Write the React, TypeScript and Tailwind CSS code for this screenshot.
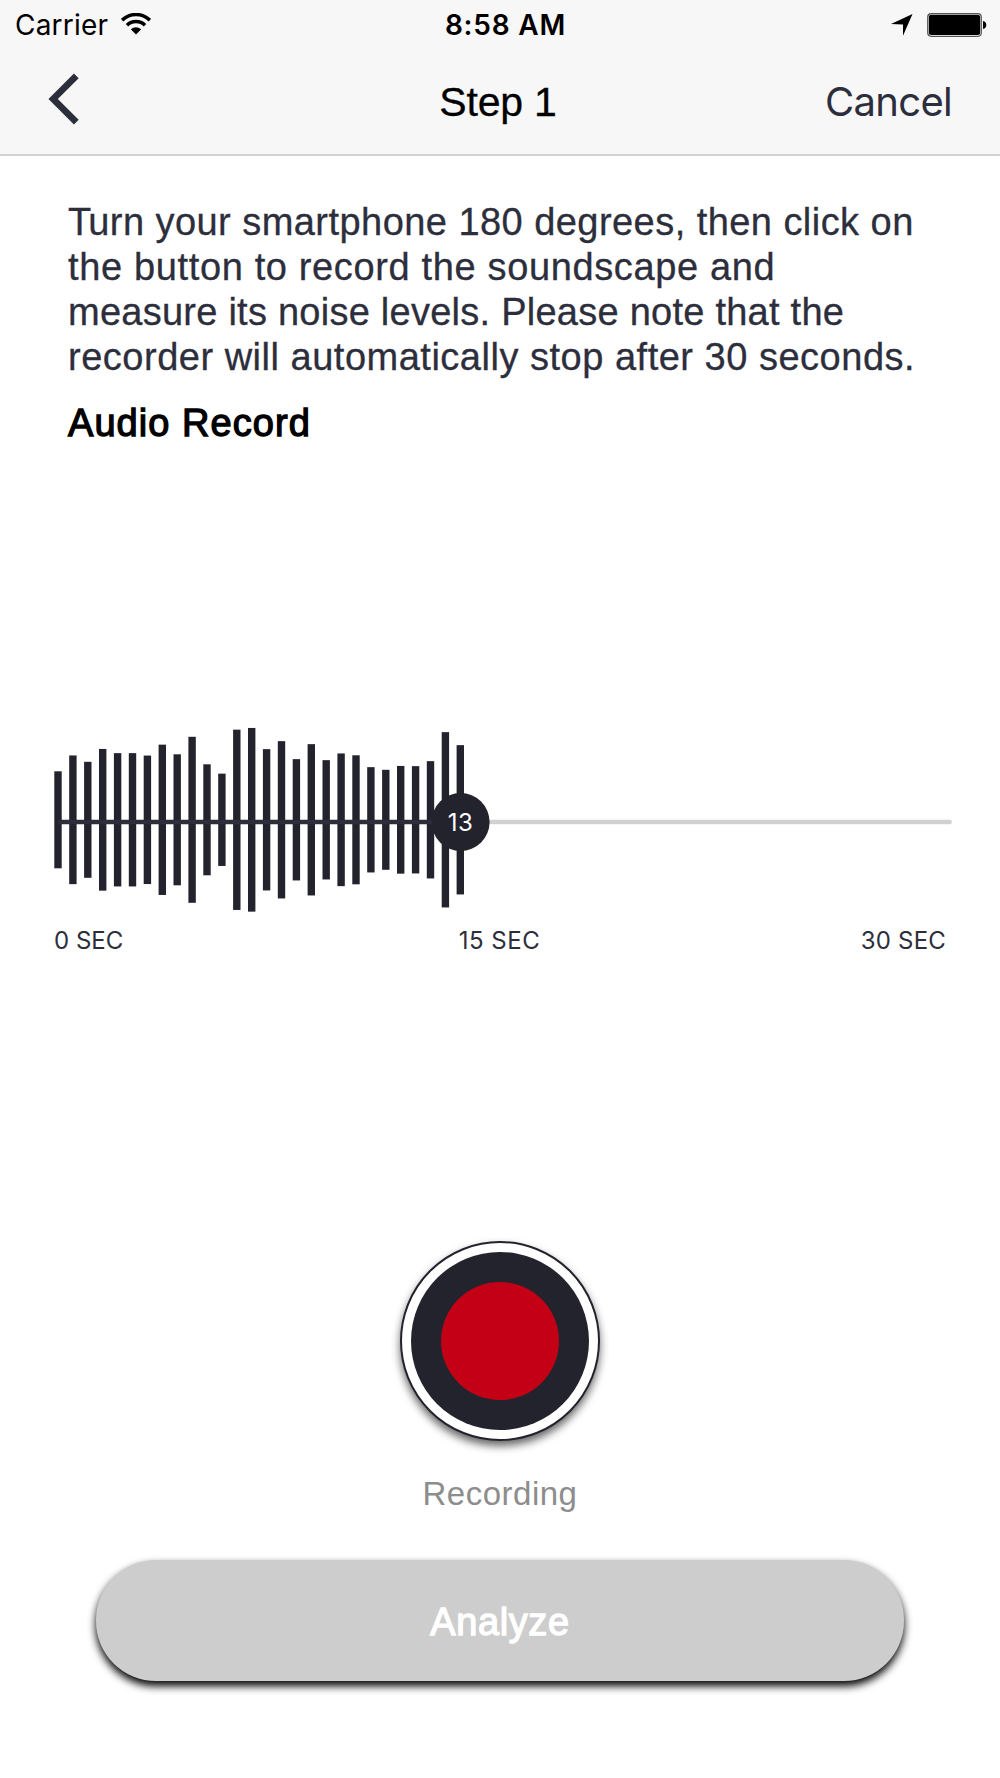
const bars: number[] = [
  97, 128.7, 116, 141.7, 133.3, 133.3, 128.5, 150.3, 131, 166, 111, 92.3, 180.3, 183.7, 141.3,
  157.3, 121.3, 151.3, 119.3, 132.7, 129, 105.3, 100, 107.7, 107.3, 117.3, 175.3, 149.3,
];

function StatusBar() {
  return (
    <div className="grid h-[50px] grid-cols-3 items-center pr-[13px] pl-[15px] font-[Inter,sans-serif] text-[28px] leading-[50px] text-black">
      <div className="flex items-center">
        <span className="tracking-[0.2px]">Carrier</span>
        <svg className="-mt-[2px] ml-[13px] h-[22px] w-[30px]" viewBox="0 0 30 22" fill="none" stroke="#000">
          <path d="M1.1 7.2C9 -.4 21 -.4 28.9 7.2" strokeWidth="3.5" />
          <path d="M6 12.2C11 7.3 19 7.3 24 12.2" strokeWidth="3.5" />
          <path d="M9.8 16.3Q15 12.2 20.2 16.3L15 21.6Z" fill="#000" stroke="none" />
        </svg>
      </div>
      <span className="pl-[9px] text-center font-semibold tracking-[0.8px]">8:58 AM</span>
      <div className="flex items-center justify-end gap-[14px]">
        <svg className="h-[22px] w-[22px]" viewBox="0 0 22 22">
          <path d="M0 10.1L21.5 0L12 21.8V10.6Z" />
        </svg>
        <svg className="h-[24px] w-[60px]" viewBox="0 0 60 24">
          <rect x=".7" y=".7" width="53.6" height="22.6" rx="3.5" fill="#fff" stroke="#555" strokeWidth="1.2" />
          <rect x="1.8" y="1.8" width="51.4" height="20.2" rx="2.5" />
          <path d="M56 8c2 .3 3.3 2 3.3 4S58 15.7 56 16Z" />
        </svg>
      </div>
    </div>
  );
}

function NavBar() {
  return (
    <div className="grid h-[104px] grid-cols-3 items-center pr-[48px] pl-[48px] text-[41px]">
      <svg className="-mt-[7px] h-[52px] w-[31px]" viewBox="0 0 31 52" fill="none">
        <path d="M28.3 2.8L5.2 26L28.3 49.2" stroke="#2d2e3c" strokeWidth="6.7" />
      </svg>
      <span className="pr-[4px] text-center leading-[104px] tracking-[-0.2px] text-black [-webkit-text-stroke:0.3px_#000]">
        Step 1
      </span>
      <span className="text-right font-[Inter,sans-serif] text-[40px] leading-[104px] tracking-[-0.7px] text-[#2d2e3c]">
        Cancel
      </span>
    </div>
  );
}

function Waveform() {
  return (
    <svg className="block h-[190px] w-full" viewBox="0 0 1000 190">
      <path d="M460 97H949.5" stroke="#d1d1d1" strokeWidth="4.7" strokeLinecap="round" />
      {bars.map((height, i) => (
        <rect key={i} x={54.3 + i * 14.9} y={94.8 - height / 2} width="7.4" height={height} fill="#23232d" />
      ))}
      <path d="M60 97H460" stroke="#2d2e3a" strokeWidth="4.7" strokeLinecap="round" />
      <circle cx="460.6" cy="97" r="29" fill="#23232d" />
      <text x="460.5" y="106" textAnchor="middle" fill="#fff" fontSize="24" letterSpacing="0.5" className="font-[Inter,sans-serif]">
        13
      </text>
    </svg>
  );
}

export default function App() {
  return (
    <div className="flex h-[1778px] w-[1000px] flex-col overflow-hidden bg-white font-['Liberation_Sans',sans-serif]">
      <header className="h-[156px] border-b-2 border-[#d2d2d4] bg-[#f7f7f7]">
        <StatusBar />
        <NavBar />
      </header>
      <section className="h-[569px] pt-[44px] pl-[68px]">
        <div className="text-[38px] leading-[45px] whitespace-nowrap text-[#2d2e3c] [-webkit-text-stroke:0.3px_#2d2e3c]">
          <p className="tracking-[0.45px]">
            <span className="tracking-[-3px]">T</span>urn your smartphone 180 degrees, then click on
          </p>
          <p className="tracking-[0.64px]">the button to record the soundscape and</p>
          <p className="tracking-[0.25px]">measure its noise levels. Please note that the</p>
          <p className="tracking-[0.51px]">recorder will automatically stop after 30 seconds.</p>
        </div>
        <h2 className="mt-[20px] text-[38px] leading-[46px] font-normal tracking-[1.05px] text-black [-webkit-text-stroke:1.3px_#000]">
          Audio Record
        </h2>
      </section>
      <section className="h-[516px]">
        <Waveform />
        <div className="flex justify-between pt-[9px] pr-[54px] pl-[54px] font-[Inter,sans-serif] text-[24px] leading-[34px] text-[#2d2e3c]">
          <span>0 SEC</span>
          <span className="pl-[15px] tracking-[0.5px]">15 SEC</span>
          <span className="tracking-[0.2px]">30 SEC</span>
        </div>
      </section>
      <section className="flex flex-col items-center">
        <button className="flex size-[200px] items-center justify-center rounded-full border-2 border-[#23232d] bg-white shadow-[0_5px_9px_rgba(0,0,0,0.6)]">
          <span className="flex size-[178px] items-center justify-center rounded-full bg-[#23232d]">
            <span className="size-[118px] rounded-full bg-[#c30015]" />
          </span>
        </button>
        <p className="mt-[33px] text-[33px] leading-[40px] tracking-[0.5px] text-[#8d8d8d]">Recording</p>
        <button className="mt-[46px] h-[121px] w-[808px] rounded-[60px] bg-[#cdcdcd] pt-[4px] text-[38px] leading-[117px] tracking-[0.6px] text-white shadow-[0_5px_9px_#000] [-webkit-text-stroke:1.3px_#fff]">
          Analyze
        </button>
      </section>
    </div>
  );
}
